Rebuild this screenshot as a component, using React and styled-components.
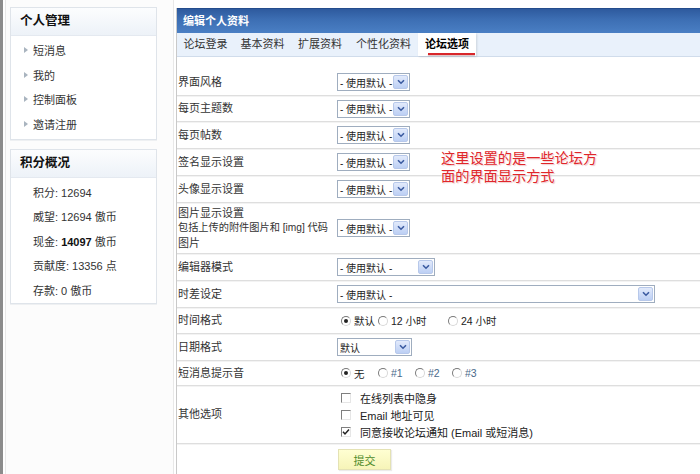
import React from 'react';
import styled, { createGlobalStyle } from 'styled-components';

const Global = createGlobalStyle`
  *, *::before, *::after { box-sizing: border-box; }
  html, body { margin: 0; padding: 0; background: #fff; }
  body {
    font-family: "Liberation Sans", "Noto Sans CJK SC", sans-serif;
    font-size: 11px;
    color: #333;
  }
`;

const Page = styled.div`
  display: flex;
  width: 700px;
  height: 474px;
  overflow: hidden;
  background: #fff;
`;

const EdgeStrip = styled.div`
  flex: none;
  width: 3px;
  background: #8c8c8c;
`;

const Sidebar = styled.aside`
  flex: none;
  width: 169px;
  margin-left: 2px;
  padding: 7px 0 0 4px;
  border-left: 1px solid #e8e8e8;
  border-right: 1px solid #e8e8e8;
  background: #fcfcfc;
  display: flex;
  flex-direction: column;
  gap: 9px;
`;

const Panel = styled.section`
  width: 147px;
  border: 1px solid #dfe4ea;
  background: #fff;
  box-shadow: 0 1px 0 #eef0f2;
`;

const PanelHeader = styled.h3`
  margin: 0;
  height: 28px;
  line-height: 27px;
  padding-left: 9px;
  font-size: 12.5px;
  font-weight: bold;
  color: #111;
  background: linear-gradient(#fcfdfe, #edf2f8);
  border-bottom: 1px solid #e4e9f0;
`;

const PanelList = styled.ul`
  list-style: none;
  margin: 0;
  padding: ${p => p.$pad};
`;

const NavItem = styled.li`
  display: flex;
  align-items: center;
  height: 24.7px;
  padding-left: 13px;
  gap: 5px;
  color: #333;
  &::before {
    content: "";
    width: 0;
    height: 0;
    border-top: 3px solid transparent;
    border-bottom: 3px solid transparent;
    border-left: 4px solid #a9b4bf;
  }
`;

const StatItem = styled.li`
  height: 24.5px;
  line-height: 24.5px;
  padding-left: 22px;
  color: #333;
  b { color: #111; }
`;

const Main = styled.main`
  position: relative;
  flex: 1;
  margin-left: 2px;
  padding-top: 8px;
  display: flex;
  flex-direction: column;
`;

const Box = styled.div`
  flex: 1;
  border-left: 1px solid #c9c9c9;
`;

const TitleBar = styled.div`
  height: 25px;
  line-height: 25px;
  padding-left: 6px;
  color: #fff;
  font-weight: bold;
  font-size: 11px;
  border-top: 1px solid #244c8c;
  background: linear-gradient(#2e5a9e, #3d6fb4 45%, #4a7fc4);
`;

const TabBar = styled.nav`
  display: flex;
  height: 24px;
  background: #e9f1fb;
  border-bottom: 1px solid #d0dceb;
`;

const Tab = styled.div`
  position: relative;
  flex: none;
  width: ${p => p.$w}px;
  padding-left: ${p => (p.$active ? '7px' : '0')};
  text-align: ${p => (p.$active ? 'left' : 'center')};
  line-height: 23px;
  font-size: 11px;
  white-space: nowrap;
  color: ${p => (p.$active ? '#000' : '#333')};
  font-weight: ${p => (p.$active ? 'bold' : 'normal')};
  background: ${p => (p.$active ? '#fff' : 'transparent')};
  box-shadow: ${p => (p.$active ? '1px 1px 2px rgba(0,0,0,0.12)' : 'none')};
  ${p => p.$active && `
    &::after {
      content: "";
      position: absolute;
      left: 10px;
      right: 1px;
      bottom: 1px;
      height: 2px;
      background: #d8262a;
      box-shadow: 0 1px 1px rgba(120,0,0,0.25);
    }
  `}
`;

const Form = styled.div`
  padding-top: 12px;
`;

const Row = styled.div`
  display: grid;
  grid-template-columns: 160px 1fr;
  align-items: ${p => (p.$top ? 'start' : 'center')};
  height: ${p => p.$h}px;
  border-bottom: ${p => (p.$last ? 'none' : '1px solid #dedede')};
  box-shadow: ${p => (p.$last ? 'none' : '0 1px 0 #f3f3f3')};
`;

const Label = styled.div`
  padding-left: 1px;
  line-height: 14.5px;
  white-space: nowrap;
  color: #333;
`;

const Tight = styled.span`
  font-size: 10.2px;
`;

const Control = styled.div`
  display: flex;
  align-items: ${p => (p.$col ? 'flex-start' : 'center')};
  flex-direction: ${p => (p.$col ? 'column' : 'row')};
  padding-left: ${p => p.$pl || 0}px;
  white-space: nowrap;
`;

const SelectBox = styled.div`
  display: flex;
  align-items: center;
  justify-content: space-between;
  width: ${p => p.$w}px;
  height: 18px;
  padding: 0 1px 0 2px;
  border: 1px solid #9fadbf;
  background: #fff;
  color: #222;
  font-size: 10px;
  white-space: nowrap;
  overflow: hidden;
`;

const Arrow = styled.span`
  flex: none;
  display: flex;
  align-items: center;
  justify-content: center;
  width: 15px;
  height: 14px;
  border: 1px solid #b7c8ea;
  border-radius: 2px;
  background: linear-gradient(#e2eafb, #bccff4);
`;

const Select = ({ w, children }) => (
  <SelectBox $w={w}>
    <span>{children}</span>
    <Arrow>
      <svg width="8" height="6" viewBox="0 0 8 6">
        <path d="M1 1.2 L4 4.2 L7 1.2" fill="none" stroke="#3a5aa0" strokeWidth="1.6" />
      </svg>
    </Arrow>
  </SelectBox>
);

const RadioOption = styled.label`
  flex: none;
  display: inline-flex;
  align-items: center;
  gap: 3px;
  width: ${p => (p.$w ? `${p.$w}px` : 'auto')};
  color: ${p => p.$c || '#222'};
  font-size: 10.5px;
`;

const RadioDot = styled.span`
  position: relative;
  flex: none;
  width: 10px;
  height: 10px;
  border-radius: 50%;
  border: 1px solid;
  border-color: #7a7a7a #d8d8d8 #d8d8d8 #7a7a7a;
  background: #fff;
  &::after {
    content: "";
    display: ${p => (p.$on ? 'block' : 'none')};
    position: absolute;
    left: 2px;
    top: 2px;
    width: 4px;
    height: 4px;
    border-radius: 50%;
    background: #222;
  }
`;

const Radio = ({ on, w, c, children }) => (
  <RadioOption $w={w} $c={c}>
    <RadioDot $on={on} />
    <span>{children}</span>
  </RadioOption>
);

const CheckLine = styled.label`
  display: flex;
  align-items: center;
  gap: 9px;
  height: 17px;
  color: #222;
`;

const CheckBox = styled.span`
  display: flex;
  align-items: center;
  justify-content: center;
  width: 10px;
  height: 10px;
  border: 1px solid;
  border-color: #7f7f7f #e6e6e6 #e6e6e6 #7f7f7f;
  background: #fff;
`;

const Check = ({ on, children }) => (
  <CheckLine>
    <CheckBox>
      {on && (
        <svg width="8" height="8" viewBox="0 0 8 8">
          <path d="M1 3.8 L3 6 L7 1.5" fill="none" stroke="#222" strokeWidth="1.5" />
        </svg>
      )}
    </CheckBox>
    <span>{children}</span>
  </CheckLine>
);

const SubmitButton = styled.button`
  width: 53px;
  height: 21px;
  margin-top: 5px;
  padding: 0;
  border: 1px solid #e4e2b4;
  background: linear-gradient(#ffffd2, #f6f4b8);
  color: #4c8a2a;
  font-family: inherit;
  font-size: 11px;
  box-shadow: 1px 1px 1px rgba(0,0,0,0.08);
`;

const Annotation = styled.div`
  position: absolute;
  left: 265px;
  top: 149px;
  font-size: 14.2px;
  line-height: 18px;
  color: #e0262a;
  text-shadow: 0 0 2px #fff, 1px 1px 1px rgba(180,0,0,0.25);
  white-space: nowrap;
`;

const DEF = '- 使用默认 -';

export default function App() {
  return (
    <>
      <Global />
      <Page>
        <EdgeStrip />
        <Sidebar>
          <Panel>
            <PanelHeader>个人管理</PanelHeader>
            <PanelList $pad="1.5px 0 2.5px">
              <NavItem>短消息</NavItem>
              <NavItem>我的</NavItem>
              <NavItem>控制面板</NavItem>
              <NavItem>邀请注册</NavItem>
            </PanelList>
          </Panel>
          <Panel>
            <PanelHeader>积分概况</PanelHeader>
            <PanelList $pad="3px 0 0">
              <StatItem>积分: 12694</StatItem>
              <StatItem>威望: 12694 傲币</StatItem>
              <StatItem>现金: <b>14097</b> 傲币</StatItem>
              <StatItem>贡献度: 13356 点</StatItem>
              <StatItem>存款: 0 傲币</StatItem>
            </PanelList>
          </Panel>
        </Sidebar>
        <Main>
          <Box>
            <TitleBar>编辑个人资料</TitleBar>
            <TabBar>
              <Tab $w={57}>论坛登录</Tab>
              <Tab $w={57}>基本资料</Tab>
              <Tab $w={58}>扩展资料</Tab>
              <Tab $w={69}>个性化资料</Tab>
              <Tab $w={58} $active>论坛选项</Tab>
            </TabBar>
            <Form>
              <Row $h={27}><Label>界面风格</Label><Control><Select w={73}>{DEF}</Select></Control></Row>
              <Row $h={26}><Label>每页主题数</Label><Control><Select w={73}>{DEF}</Select></Control></Row>
              <Row $h={27}><Label>每页帖数</Label><Control><Select w={73}>{DEF}</Select></Control></Row>
              <Row $h={27}><Label>签名显示设置</Label><Control><Select w={73}>{DEF}</Select></Control></Row>
              <Row $h={27}><Label>头像显示设置</Label><Control><Select w={73}>{DEF}</Select></Control></Row>
              <Row $h={51}>
                <Label>图片显示设置<br /><Tight>包括上传的附件图片和 [img] 代码</Tight><br />图片</Label>
                <Control><Select w={73}>{DEF}</Select></Control>
              </Row>
              <Row $h={27}><Label>编辑器模式</Label><Control><Select w={98}>{DEF}</Select></Control></Row>
              <Row $h={27}><Label>时差设定</Label><Control><Select w={318}>{DEF}</Select></Control></Row>
              <Row $h={26}>
                <Label>时间格式</Label>
                <Control $pl={4}>
                  <Radio on w={37}>默认</Radio>
                  <Radio w={70}>12 小时</Radio>
                  <Radio>24 小时</Radio>
                </Control>
              </Row>
              <Row $h={27}><Label>日期格式</Label><Control><Select w={75}>默认</Select></Control></Row>
              <Row $h={25}>
                <Label>短消息提示音</Label>
                <Control $pl={4}>
                  <Radio on w={37}>无</Radio>
                  <Radio w={37} c="#4a6a8a">#1</Radio>
                  <Radio w={37} c="#4a6a8a">#2</Radio>
                  <Radio c="#4a6a8a">#3</Radio>
                </Control>
              </Row>
              <Row $h={58}>
                <Label>其他选项</Label>
                <Control $col $pl={4}>
                  <Check>在线列表中隐身</Check>
                  <Check>Email 地址可见</Check>
                  <Check on>同意接收论坛通知 (Email 或短消息)</Check>
                </Control>
              </Row>
              <Row $h={30} $last $top>
                <Label />
                <Control $pl={1}><SubmitButton>提交</SubmitButton></Control>
              </Row>
            </Form>
          </Box>
          <Annotation>这里设置的是一些论坛方<br />面的界面显示方式</Annotation>
        </Main>
      </Page>
    </>
  );
}
